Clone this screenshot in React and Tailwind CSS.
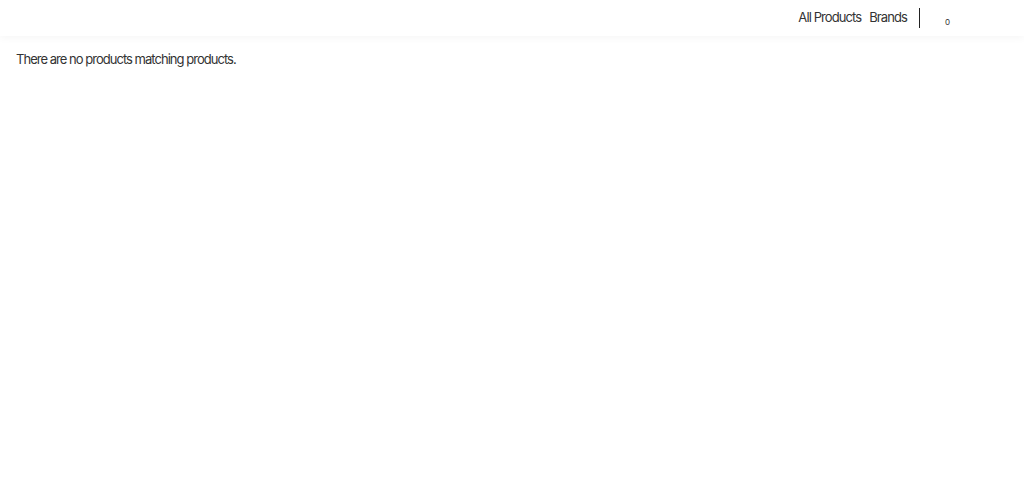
import React from 'react';

const App = () => {
  return (
    <div className="min-h-screen bg-white text-[#333] font-['Inter',sans-serif]">
      <header className="h-9 flex items-center justify-end pr-[74px] shadow-[0_2px_8px_rgba(0,0,0,0.04)]">
        <nav className="flex items-center gap-2 text-[13px] tracking-[-0.07em]">
          <a href="#" className="text-[#333]">All Products</a>
          <a href="#" className="text-[#333]">Brands</a>
        </nav>
        <div className="ml-3 h-5 w-px bg-[#222]" />
        <div className="ml-[25px] mt-2 text-[8px] text-[#333]">0</div>
      </header>
      <main className="px-4 pt-[14px]">
        <p className="text-[13px] tracking-[-0.075em] text-[#333]">There are no products matching products.</p>
      </main>
    </div>
  );
};

export default App;
